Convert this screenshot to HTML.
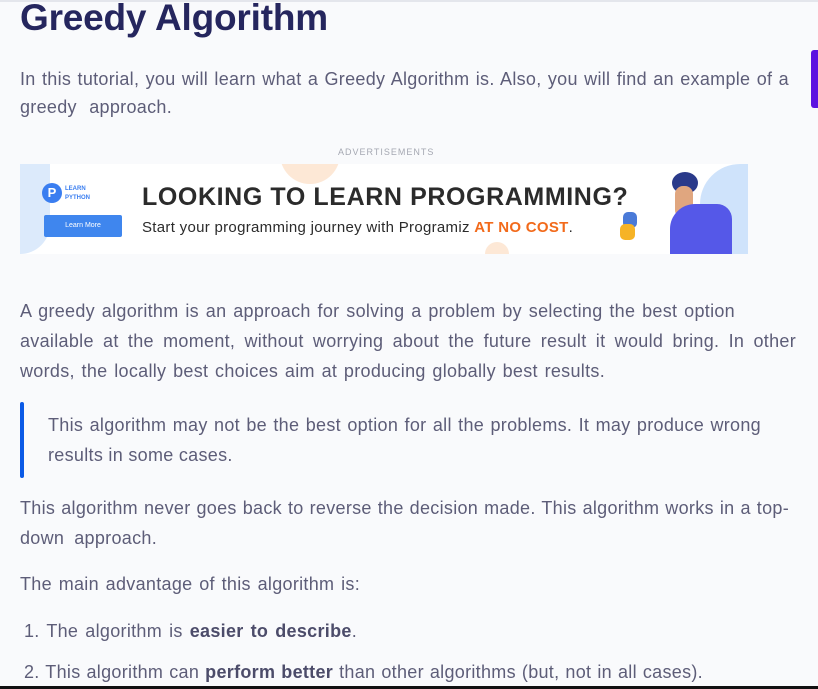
<!DOCTYPE html>
<html><head><meta charset="utf-8"><style>
html,body{margin:0;padding:0}
body{width:818px;height:689px;overflow:hidden;background:#f9fafc;position:relative;font-family:"Liberation Sans",sans-serif;color:#5d5d78}
.l{position:absolute;left:20px;white-space:nowrap;font-size:18px;line-height:20px;letter-spacing:0.3px;text-align:justify;text-align-last:justify}
b{color:#4c4c6a}
</style></head><body>
<div style="position:absolute;left:0;top:0;width:818px;height:2px;background:#e4e6ec"></div>
<div style="position:absolute;left:20px;top:-3px;font-size:37px;font-weight:bold;color:#25265e;white-space:nowrap;letter-spacing:-0.2px">Greedy Algorithm</div>
<div style="position:absolute;left:811px;top:50px;width:7px;height:58px;background:#5c12e0;border-radius:3px 0 0 3px"></div>
<div class="l" style="top:69px;width:769px">In this tutorial, you will learn what a Greedy Algorithm is. Also, you will find an example of a</div>
<div class="l" style="top:97px;width:152px">greedy approach.</div>
<div style="position:absolute;left:338px;top:147px;font-size:9px;color:#a5a8b2;letter-spacing:1px">ADVERTISEMENTS</div>
<div style="position:absolute;left:20px;top:164px;width:728px;height:90px;background:#fff;overflow:hidden">
 <div style="position:absolute;left:0;top:0;width:30px;height:90px;background:#dceafb;border-radius:0 0 30px 0"></div>
 <div style="position:absolute;left:260px;top:-40px;width:60px;height:60px;border-radius:50%;background:#fde8d6"></div>
 <div style="position:absolute;left:465px;top:78px;width:24px;height:24px;border-radius:50%;background:#fde8d6"></div>
 <div style="position:absolute;left:680px;top:0;width:48px;height:90px;background:#cfe3fb;border-radius:40px 0 0 0"></div>
 <div style="position:absolute;left:22px;top:19px;width:20px;height:20px;border-radius:50%;background:#3a7ef0;color:#fff;font-size:13px;font-weight:bold;text-align:center;line-height:20px">P</div>
 <div style="position:absolute;left:45px;top:21px;font-size:6px;font-weight:bold;color:#3a7ef0;line-height:9px">LEARN<br>PYTHON</div>
 <div style="position:absolute;left:24px;top:51px;width:78px;height:22px;background:#3f86ee;border-radius:2px;color:#fff;font-size:7px;text-align:center;line-height:22px">Learn More</div>
 <div style="position:absolute;left:122px;top:19px;font-size:25px;font-weight:bold;color:#2b2b2b;white-space:nowrap;letter-spacing:0.6px">LOOKING TO LEARN PROGRAMMING?</div>
 <div style="position:absolute;left:122px;top:55px;font-size:15px;color:#2b2b2b;white-space:nowrap;letter-spacing:0.3px">Start your programming journey with Programiz <b style="color:#f26a1b">AT NO COST</b>.</div>
 <div style="position:absolute;left:652px;top:8px;width:26px;height:22px;border-radius:50%;background:#2a3a8a"></div>
 <div style="position:absolute;left:655px;top:22px;width:18px;height:32px;border-radius:8px;background:#e0a67f"></div>
 <div style="position:absolute;left:650px;top:40px;width:62px;height:55px;background:#5558e8;border-radius:25px 15px 0 0"></div>
 <div style="position:absolute;left:603px;top:48px;width:14px;height:16px;background:#4a7ad8;border-radius:5px"></div>
 <div style="position:absolute;left:600px;top:60px;width:15px;height:16px;background:#f6b326;border-radius:5px"></div>
</div>
<div class="l" style="top:301px;width:715px">A greedy algorithm is an approach for solving a problem by selecting the best option</div>
<div class="l" style="top:331px;width:776px">available at the moment, without worrying about the future result it would bring. In other</div>
<div class="l" style="top:361px;width:585px">words, the locally best choices aim at producing globally best results.</div>
<div style="position:absolute;left:20px;top:402px;width:4px;height:76px;background:#0b5ae6;border-radius:2px"></div>
<div class="l" style="left:48px;top:415px;width:713px">This algorithm may not be the best option for all the problems. It may produce wrong</div>
<div class="l" style="left:48px;top:445px;width:182px">results in some cases.</div>
<div class="l" style="top:498px;width:769px">This algorithm never goes back to reverse the decision made. This algorithm works in a top-</div>
<div class="l" style="top:528px;width:137px">down approach.</div>
<div class="l" style="top:574px;width:340px">The main advantage of this algorithm is:</div>
<div class="l" style="left:24px;top:621px;width:333px">1. The algorithm is <b>easier to describe</b>.</div>
<div class="l" style="left:24px;top:662px;width:679px">2. This algorithm can <b>perform better</b> than other algorithms (but, not in all cases).</div>
<div style="position:absolute;left:0;top:686px;width:818px;height:3px;background:#111"></div>
</body></html>
